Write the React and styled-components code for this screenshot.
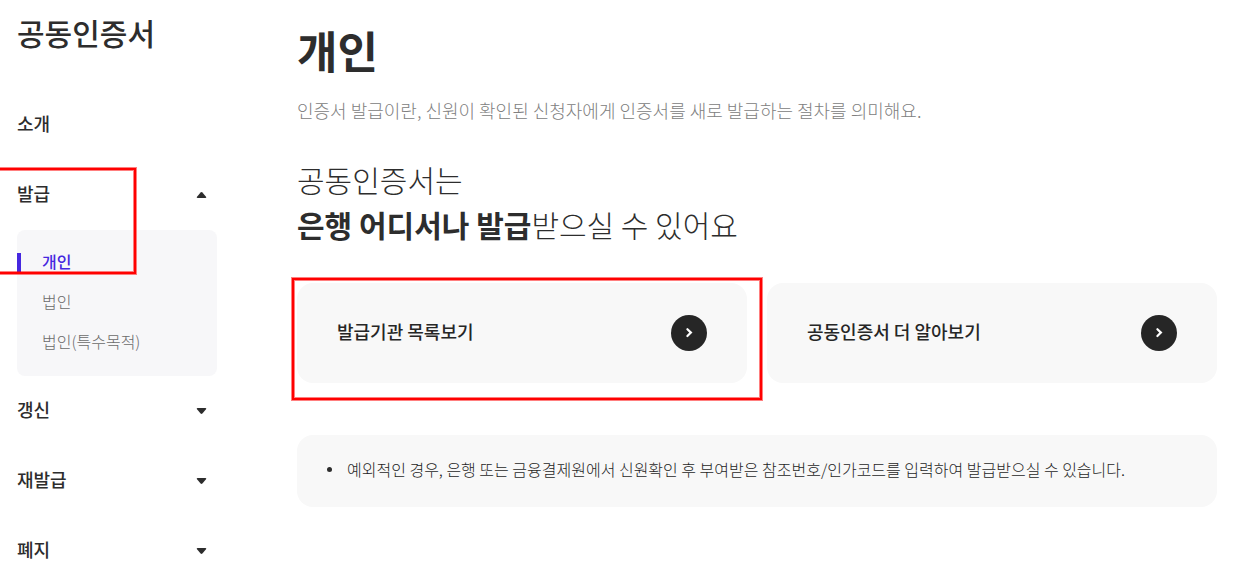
import React from 'react';
import styled, {createGlobalStyle, css} from "styled-components";

const GlobalStyle=createGlobalStyle`
    *{
        box-sizing:border-box;
    }
    body{
        margin:0;
        background:#fff;
        color:#2d2d2d;
        font-family:"Noto Sans CJK KR", "Noto Sans", sans-serif;
    }
    h1, h2, p, ul{
        margin:0;
        padding:0;
    }
    ul{
        list-style:none;
    }
    a{
        color:inherit;
        text-decoration:none;
    }
`;

const Page=styled.div`
    display:flex;
    gap:80px;
    padding:0 34px 0 17px;
    @media (max-width: 760px){
        flex-direction:column;
        gap:40px;
    }
`;

const Sidebar=styled.aside`
    flex:0 0 200px;
    padding-top:10px;
`;

const SidebarTitle=styled.h2`
    margin-bottom:33px;
    font-size:30px;
    font-weight:500;
    line-height:45px;
`;

const MenuItem=styled.li`
    position:relative;
    padding:20px 0;
    &:last-child{
        padding-bottom:0;
    }
`;

const menuText=css`
    display:flex;
    align-items:center;
    justify-content:space-between;
    width:100%;
    font-size:18px;
    font-weight:500;
    line-height:30px;
`;

const MenuLink=styled.a`
    ${menuText}
`;

const MenuButton=styled.button`
    ${menuText}
    padding:0 10px 0 0;
    border:0;
    background:none;
    color:inherit;
    font-family:inherit;
    text-align:left;
    cursor:pointer;
`;

const Arrow=styled.svg`
    width:11px;
    height:12px;
    fill:#2d2d2d;
`;

const SubMenu=styled.ul`
    margin:22px 0 -22px;
    padding:13px 0;
    border-radius:8px;
    background:#f7f7f9;
`;

const SubItem=styled.li`
    display:flex;
    align-items:center;
    height:40px;
`;

const SubLink=styled.a`
    flex:1;
    padding:0 0 4px ${({$active}) => $active ? "21px" : "25px"};
    border-left:${({$active}) => $active ? "4px solid #4628e0" : "0"};
    color:${({$active}) => $active ? "#4628e0" : "#6b6b6b"};
    font-size:16px;
    font-weight:${({$active}) => $active ? 500 : 300};
    line-height:16px;
`;

const Content=styled.main`
    flex:1;
    min-width:0;
    padding-top:17px;
`;

const Title=styled.h1`
    font-size:44px;
    font-weight:700;
    line-height:66px;
`;

const Description=styled.p`
    margin-top:12px;
    color:#808080;
    font-size:18px;
    font-weight:300;
    line-height:30px;
`;

const Headline=styled.h2`
    margin-top:32px;
    font-size:30px;
    font-weight:300;
    line-height:45px;
    strong{
        font-weight:700;
    }
`;

const Cards=styled.div`
    display:grid;
    grid-template-columns:repeat(2, 1fr);
    gap:20px;
    margin-top:36px;
    @media (max-width: 960px){
        grid-template-columns:1fr;
    }
`;

const Card=styled.a`
    position:relative;
    display:flex;
    align-items:center;
    justify-content:space-between;
    padding:32px 40px;
    border-radius:16px;
    background:#f8f8f8;
    color:#262626;
`;

const CardLabel=styled.span`
    padding-bottom:4px;
    font-size:18px;
    font-weight:500;
    line-height:30px;
`;

const Circle=styled.span`
    display:flex;
    align-items:center;
    justify-content:center;
    width:36px;
    height:36px;
    border-radius:50%;
    background:#262626;
`;

const Notice=styled.ul`
    margin-top:52px;
    padding:18px 30px 22px;
    border-radius:16px;
    background:#f8f8f8;
`;

const NoticeItem=styled.li`
    display:flex;
    align-items:center;
    gap:15px;
    color:#1f1f1f;
    font-size:16px;
    font-weight:300;
    line-height:32px;
    &::before{
        content:"";
        flex:none;
        width:5px;
        height:5px;
        border-radius:50%;
        background:#2d2d2d;
    }
`;

// red outline laid over the part that the guide points at
const Marker=styled.span`
    position:absolute;
    border:2px solid #f00;
    box-shadow:0 0 0 1px rgba(255, 0, 0, 0.5), inset 0 0 0 1px rgba(255, 0, 0, 0.5);
    pointer-events:none;
`;

const MenuMarker=styled(Marker)`
    top:10px;
    left:-20px;
    width:139px;
    height:106px;
`;

const CardMarker=styled(Marker)`
    inset:-5px -15px -17px -5px;
`;

const menu=[
    {name:"소개"},
    {name:"발급", open:true, marked:true, children:["개인", "법인", "법인(특수목적)"]},
    {name:"갱신", children:[]},
    {name:"재발급", children:[]},
    {name:"폐지", children:[]},
];

const cards=[
    {name:"발급기관 목록보기", marked:true},
    {name:"공동인증서 더 알아보기"},
];

const arrowUp="M1.7 11h7.6q1.3 0 .9-1L6.4 5.4q-.9-.9-1.8 0L.8 10q-.4 1 .9 1z";
const arrowDown="M1.7 5h7.6q1.3 0 .9 1L6.4 10.6q-.9.9-1.8 0L.8 6q-.4-1 .9-1z";

const App= () => {
    return <>
        <GlobalStyle />
        <Page>
            <Sidebar>
                <SidebarTitle>공동인증서</SidebarTitle>
                <ul>
                    {menu.map((item) => (
                        <MenuItem key={item.name}>
                            {item.children ? (
                                <MenuButton type="button" aria-expanded={!!item.open}>
                                    {item.name}
                                    <Arrow viewBox="0 0 11 12" aria-hidden="true">
                                        <path d={item.open ? arrowUp : arrowDown} />
                                    </Arrow>
                                </MenuButton>
                            ) : (
                                <MenuLink href="#">{item.name}</MenuLink>
                            )}
                            {item.open && (
                                <SubMenu>
                                    {item.children.map((child, i) => (
                                        <SubItem key={child}>
                                            <SubLink href="#" $active={i === 0}>{child}</SubLink>
                                        </SubItem>
                                    ))}
                                </SubMenu>
                            )}
                            {item.marked && <MenuMarker />}
                        </MenuItem>
                    ))}
                </ul>
            </Sidebar>
            <Content>
                <Title>개인</Title>
                <Description>인증서 발급이란, 신원이 확인된 신청자에게 인증서를 새로 발급하는 절차를 의미해요.</Description>
                <Headline>
                    공동인증서는<br />
                    <strong>은행 어디서나 발급</strong>받으실 수 있어요
                </Headline>
                <Cards>
                    {cards.map((card) => (
                        <Card key={card.name} href="#">
                            <CardLabel>{card.name}</CardLabel>
                            <Circle>
                                <svg width="12" height="12" viewBox="0 0 12 12" fill="none" stroke="#fff" strokeWidth="2.2" aria-hidden="true">
                                    <path d="M4.4 2.2l3.5 3.4-3.5 3.4" strokeLinecap="round" />
                                </svg>
                            </Circle>
                            {card.marked && <CardMarker />}
                        </Card>
                    ))}
                </Cards>
                <Notice>
                    <NoticeItem>예외적인 경우, 은행 또는 금융결제원에서 신원확인 후 부여받은 참조번호/인가코드를 입력하여 발급받으실 수 있습니다.</NoticeItem>
                </Notice>
            </Content>
        </Page>
    </>;
}

export default App;
